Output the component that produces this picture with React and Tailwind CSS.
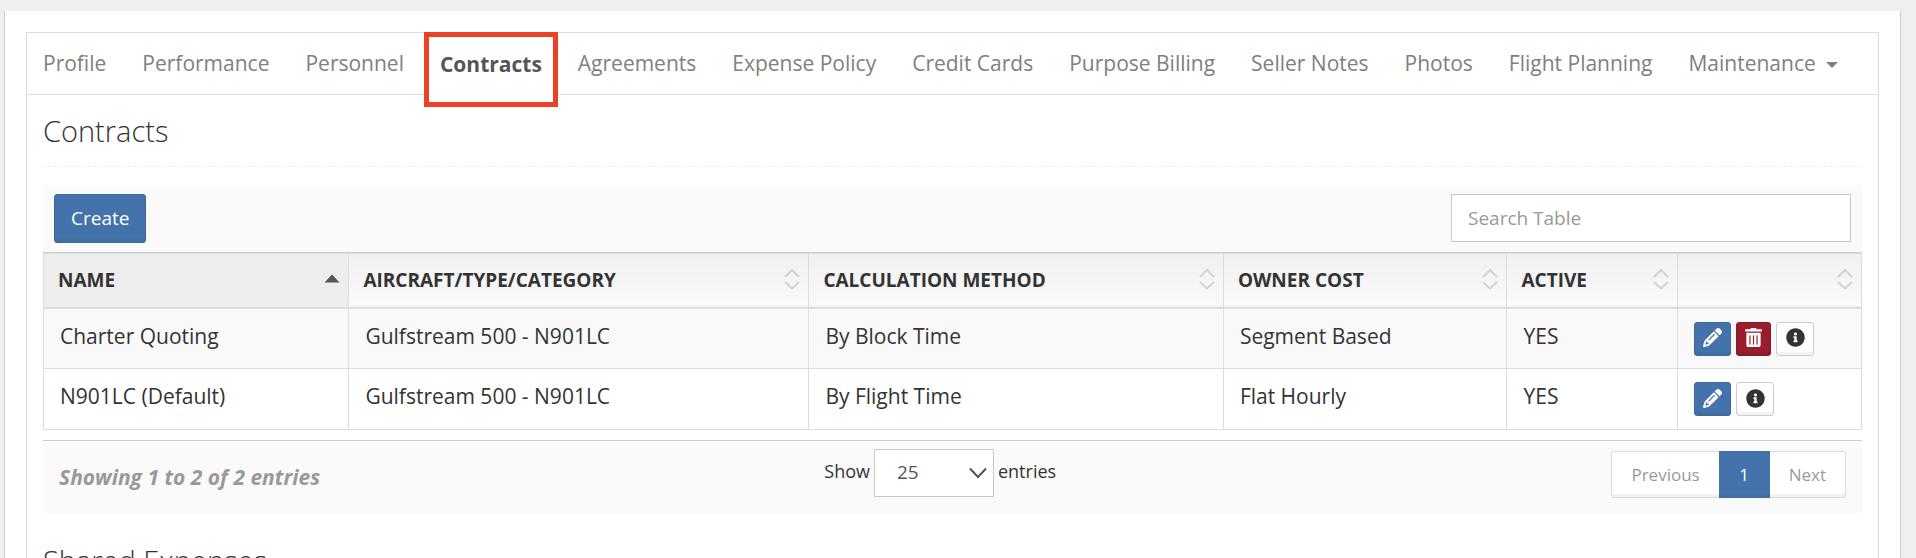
import React, { useState } from 'react';
import { FaInfoCircle, FaTrashAlt } from 'react-icons/fa';
import { FaPencil } from 'react-icons/fa6';

const tabs = [
  'Profile',
  'Performance',
  'Personnel',
  'Contracts',
  'Agreements',
  'Expense Policy',
  'Credit Cards',
  'Purpose Billing',
  'Seller Notes',
  'Photos',
  'Flight Planning',
  'Maintenance',
];

const columns = [
  { label: 'Name', width: 'w-[16.8%]' },
  { label: 'Aircraft/Type/Category', width: 'w-[25.3%]' },
  { label: 'Calculation Method', width: 'w-[22.8%]' },
  { label: 'Owner Cost', width: 'w-[15.6%]' },
  { label: 'Active', width: 'w-[9.4%]' },
  { label: '', width: 'w-[10.1%]' },
];

const contracts = [
  { name: 'Charter Quoting', aircraft: 'Gulfstream 500 - N901LC', method: 'By Block Time', cost: 'Segment Based', active: 'YES', removable: true },
  { name: 'N901LC (Default)', aircraft: 'Gulfstream 500 - N901LC', method: 'By Flight Time', cost: 'Flat Hourly', active: 'YES', removable: false },
];

function Tabs() {
  return (
    <nav className="border-b border-[#dddddd]">
      <ul className="flex h-[61px] items-start gap-1 text-[21px] leading-[60px] text-[#808080]">
        {tabs.map((tab) =>
          tab === 'Contracts' ? (
            <li key={tab} className="-mt-px">
              <a href="#contracts" className="block h-[75px] border-5 border-[#ea4127] bg-white px-[11px] leading-[54px] font-bold text-[#555555]">
                {tab}
              </a>
            </li>
          ) : (
            <li key={tab}>
              <a href="#tab" className="flex items-center px-4">
                {tab}
                {tab === 'Maintenance' && (
                  <span className="mt-1 ml-2.5 border-x-6 border-t-6 border-x-transparent border-t-[#808080]"></span>
                )}
              </a>
            </li>
          )
        )}
      </ul>
    </nav>
  );
}

function SortIcon({ sorted }) {
  if (sorted) {
    return (
      <svg width="16" height="9" viewBox="0 0 16 9" className="mb-1 shrink-0" fill="#555555">
        <path d="M8 0.5 15.5 8.5H0.5z" />
      </svg>
    );
  }
  return (
    <svg width="16" height="22" viewBox="0 0 16 22" className="mb-0.5 shrink-0" fill="none" stroke="#d3d3d3" strokeWidth="2">
      <path d="M1 9 8 2l7 7M1 14l7 6.500 7-6.500" />
    </svg>
  );
}

function RowActions({ removable }) {
  return (
    <div className="flex gap-[5px] text-[19px]">
      <button aria-label="Edit" className="flex h-[34px] w-[37px] items-center justify-center rounded-[3px] border border-[#3d6a9e] bg-[#4473ab] pb-0.5 text-white shadow-[inset_0_-3px_0_rgba(0,0,0,0.05)]">
        <FaPencil />
      </button>
      {removable && (
        <button aria-label="Delete" className="flex h-[34px] w-[35px] items-center justify-center rounded-[3px] border border-[#851a2a] bg-[#981d2f] pb-0.5 text-white shadow-[inset_0_-3px_0_rgba(0,0,0,0.05)]">
          <FaTrashAlt />
        </button>
      )}
      <button aria-label="Info" className="flex h-[34px] w-[38px] items-center justify-center rounded-[3px] border border-[#cccccc] bg-white pb-0.5 text-[#333333] shadow-[inset_0_-3px_0_rgba(0,0,0,0.05)]">
        <FaInfoCircle />
      </button>
    </div>
  );
}

function ContractsTable({ rows }) {
  return (
    <table className="w-full table-fixed border-collapse border border-[#dddddd] text-left">
      <thead>
        <tr className="h-[54px] border-b-2 border-[#dddddd] bg-linear-to-b from-[#f0f0f0] to-[#fafafa]">
          {columns.map((column, i) => (
            <th
              key={i}
              className={`${column.width} border-r border-[#dddddd] pr-2 pl-[14px] text-[19px] font-bold uppercase ${i === 0 ? 'bg-[#ededed]' : ''}`}
            >
              <div className="flex items-center justify-between">
                <span>{column.label}</span>
                <SortIcon sorted={i === 0} />
              </div>
            </th>
          ))}
        </tr>
      </thead>
      <tbody className="text-[21px] leading-7">
        {rows.map((row) => (
          <tr key={row.name} className="h-[61px] border-b border-[#dddddd] align-top odd:bg-[#f9f9f9]">
            <td className="border-r border-[#dddddd] px-4 pt-[13px]">{row.name}</td>
            <td className="border-r border-[#dddddd] px-4 pt-[13px]">{row.aircraft}</td>
            <td className="border-r border-[#dddddd] px-4 pt-[13px]">{row.method}</td>
            <td className="border-r border-[#dddddd] px-4 pt-[13px]">{row.cost}</td>
            <td className="border-r border-[#dddddd] px-4 pt-[13px]">{row.active}</td>
            <td className="px-4 pt-[13px]">
              <RowActions removable={row.removable} />
            </td>
          </tr>
        ))}
      </tbody>
    </table>
  );
}

function TableFooter({ total, pageSize, setPageSize }) {
  return (
    <div className="mt-2.5 border-t border-[#cccccc] pt-0.5">
      <div className="grid h-[70px] grid-cols-[43%_1fr_auto] items-start bg-[#fafafa] pr-4">
        <p className="pt-5 pl-4 text-[21px] leading-7 font-bold text-[#999999] italic">
          Showing 1 to {total} of {total} entries
        </p>
        <label className="flex items-center gap-1 pt-1.5 pl-1.5 text-lg">
          <span className="pb-1">Show</span>
          <span className="relative">
            <select
              value={pageSize}
              onChange={(e) => setPageSize(e.target.value)}
              className="h-12 w-[120px] appearance-none border border-[#c8c8c8] bg-white pl-[22px] text-[19px] text-[#555555]"
            >
              <option>10</option>
              <option>25</option>
              <option>50</option>
            </select>
            <svg width="18" height="12" viewBox="0 0 18 12" fill="none" stroke="#555555" strokeWidth="2" className="pointer-events-none absolute top-[18px] right-[7px]">
              <path d="M1 1.500 9 10l8-8.500" />
            </svg>
          </span>
          <span className="pb-1">entries</span>
        </label>
        <div className="mt-2 flex h-[47px] text-[17px] text-[#999999]">
          <button className="rounded-l-[3px] border border-r-0 border-[#dddddd] bg-white px-[19px] shadow-[inset_0_-3px_0_rgba(0,0,0,0.05)]">Previous</button>
          <button className="w-[51px] bg-[#4473ab] text-white shadow-[inset_0_-3px_0_rgba(0,0,0,0.05)]">1</button>
          <button className="rounded-r-[3px] border border-l-0 border-[#dddddd] bg-white px-[19px] shadow-[inset_0_-3px_0_rgba(0,0,0,0.05)]">Next</button>
        </div>
      </div>
    </div>
  );
}

export default function App() {
  const [search, setSearch] = useState('');
  const [pageSize, setPageSize] = useState('25');

  const rows = contracts.filter((c) => c.name.toLowerCase().includes(search.toLowerCase()));

  return (
    <div className="h-screen overflow-hidden bg-[#efefef] pt-[11px] pr-[15px] pl-1 font-['Open_Sans',sans-serif] text-[#333333]">
      <div className="min-h-full border-x border-[#cccccc] bg-white px-[21px] pt-[21px]">
        <div className="border border-[#dddddd]">
          <Tabs />
          <main className="px-4">
            <h2 className="border-b border-dashed border-[#eeeeee] pt-4 pb-4 text-[29px] leading-[39px] font-light">Contracts</h2>

            <section className="mt-[18px]">
              <div className="flex items-start justify-between border-b border-[#cccccc] bg-[#fafafa] px-[11px] pt-[9px] pb-[9px]">
                <button className="h-[49px] rounded-[3px] border border-[#3d6a9e] bg-[#4473ab] px-4 text-[19px] text-white shadow-[inset_0_-3px_0_rgba(0,0,0,0.05)]">
                  Create
                </button>
                <input
                  type="text"
                  aria-label="Search Table"
                  placeholder="Search Table"
                  value={search}
                  onChange={(e) => setSearch(e.target.value)}
                  className="h-12 w-[400px] border border-[#c8c8c8] bg-white px-4 text-[19px] placeholder:text-[#999999]"
                />
              </div>
              <ContractsTable rows={rows} />
              <TableFooter total={rows.length} pageSize={pageSize} setPageSize={setPageSize} />
            </section>

            <h2 className="border-b border-dashed border-[#eeeeee] pt-7 pb-4 text-[29px] leading-[39px] font-light">Shared Expenses</h2>
          </main>
        </div>
      </div>
    </div>
  );
}
